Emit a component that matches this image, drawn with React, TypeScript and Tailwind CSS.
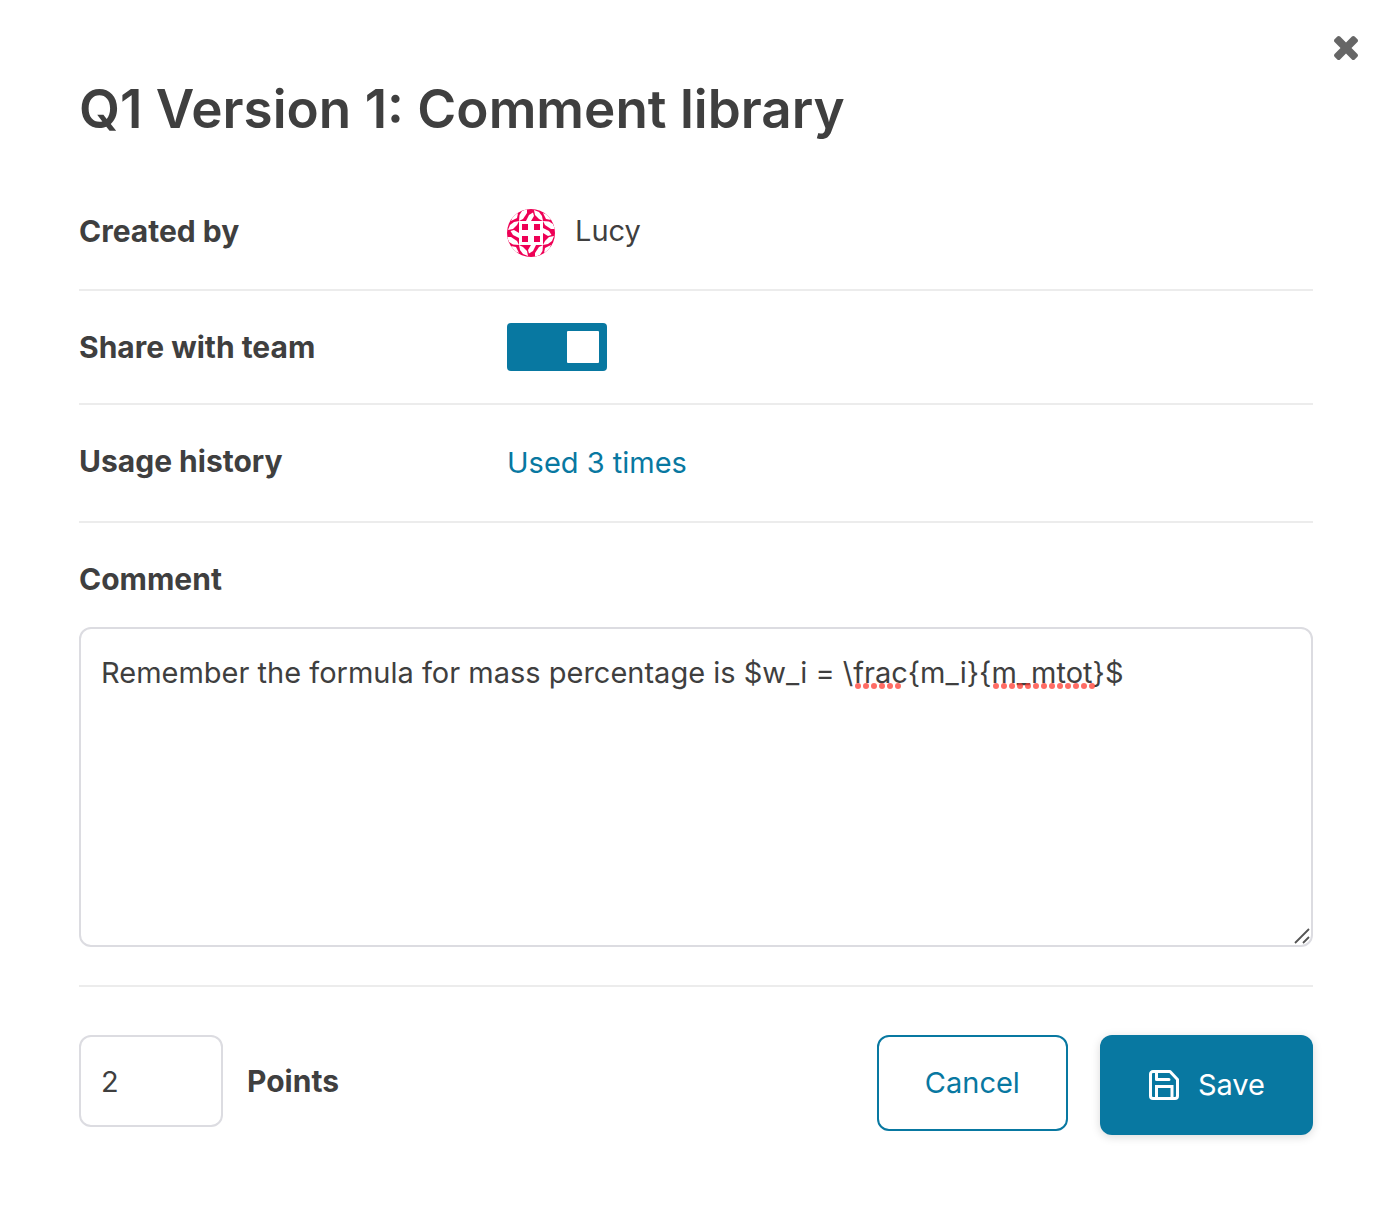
import { useState } from 'react';

// dotted underline drawn below a misspelt word
function SpellingDots({ count }: { count: number }) {
  return (
    <svg width={count * 8} height="6" className="block" aria-hidden="true">
      {Array.from({ length: count }, (_, i) => (
        <circle key={i} cx={i * 8 + 3} cy="3" r="3" fill="#ff3b30" fillOpacity="0.75" />
      ))}
    </svg>
  );
}

// one corner of the identicon, the others are rotations of it
function IdenticonQuarter({ turn }: { turn: number }) {
  return (
    <g transform={`rotate(${turn} 24 24)`} fill="#fff">
      <path d="M12 12 L12.500 6 L15 2 L20 0 L20 4 L16 10 Z" />
      <path d="M19 12 L22 6 L26 3.500 L27 7 L24 12 Z" />
      <path d="M27 1 L32 3 L35 7 L36 12 L32 10 L28 6 Z" />
      <path d="M36 4 L41 6 L44 11 L39 10 Z" />
      <path d="M12 12 h12 v12 h-12 z" />
      <path d="M15 15 h6 v6 h-6 z" fill="#ee0055" />
    </g>
  );
}

function Avatar() {
  return (
    <svg width="48" height="48" viewBox="0 0 48 48" className="rounded-full" aria-hidden="true">
      <rect width="48" height="48" fill="#ee0055" />
      <IdenticonQuarter turn={0} />
      <IdenticonQuarter turn={90} />
      <IdenticonQuarter turn={180} />
      <IdenticonQuarter turn={270} />
    </svg>
  );
}

function CloseIcon() {
  return (
    <svg width="24" height="24" viewBox="302 366 1188 1188" fill="currentColor" aria-hidden="true">
      <path d="M1490 1322q0 40-28 68l-136 136q-28 28-68 28t-68-28l-294-294-294 294q-28 28-68 28t-68-28l-136-136q-28-28-28-68t28-68l294-294-294-294q-28-28-28-68t28-68l136-136q28-28 68-28t68 28l294 294 294-294q28-28 68-28t68 28l136 136q28 28 28 68t-28 68l-294 294 294 294q28 28 28 68z" />
    </svg>
  );
}

function SaveIcon() {
  return (
    <svg width="32" height="32" viewBox="0 0 32 32" fill="none" stroke="currentColor" strokeWidth="3" strokeLinejoin="round" strokeLinecap="round" aria-hidden="true">
      <path d="M5 2.500 H22 L29.500 10.500 V27 A2.500 2.500 0 0 1 27 29.500 H5 A2.500 2.500 0 0 1 2.500 27 V5 A2.500 2.500 0 0 1 5 2.500 Z" />
      <path d="M8.500 3 V10.500 H21" />
      <path d="M8.500 29 V17.500 H24 V29" strokeLinejoin="miter" />
    </svg>
  );
}

export default function App() {
  const [shared, setShared] = useState(true);
  const [comment, setComment] = useState('Remember the formula for mass percentage is $w_i = \\frac{m_i}{m_mtot}$');
  const [points, setPoints] = useState('2');

  return (
    <div role="dialog" aria-labelledby="title" className="relative min-h-screen bg-white py-20 pr-[78px] pl-[79px] font-['Inter',sans-serif] text-[29px] leading-9 text-[#3f3f3f]">
      <button type="button" aria-label="Close" className="absolute top-9 right-[33px] text-[#666]">
        <CloseIcon />
      </button>

      <h1 id="title" className="text-[53px] leading-[58px] font-semibold">Q1 Version 1: Comment library</h1>

      {/* Details */}
      <dl className="mt-[38px]">
        <div className="flex h-[115px] items-center border-b-2 border-[#ececec]">
          <dt className="w-[428px] pb-1 text-[30px] font-bold">Created by</dt>
          <dd className="flex items-center gap-5">
            <Avatar />
            <span className="pb-1">Lucy</span>
          </dd>
        </div>
        <div className="flex h-[114px] items-center border-b-2 border-[#ececec]">
          <dt className="w-[428px] text-[30px] font-bold">
            <label htmlFor="share">Share with team</label>
          </dt>
          <dd className="flex">
            <input
              id="share"
              type="checkbox"
              role="switch"
              checked={shared}
              onChange={e => setShared(e.target.checked)}
              className="flex h-12 w-[100px] cursor-pointer appearance-none items-center rounded-sm bg-gray-400 p-2 before:size-8 before:rounded-[1px] before:bg-white checked:justify-end checked:bg-[#0878a1]"
            />
          </dd>
        </div>
        <div className="flex h-[118px] items-center border-b-2 border-[#ececec]">
          <dt className="w-[428px] pb-1 text-[30px] font-bold">Usage history</dt>
          <dd><a href="#usage" className="text-[#0878a1]">Used 3 times</a></dd>
        </div>
      </dl>

      {/* Comment */}
      <div className="border-b-2 border-[#ececec] py-[38px]">
        <label htmlFor="comment" className="block text-[30px] font-bold">Comment</label>
        <div className="relative mt-[30px]">
          <textarea
            id="comment"
            value={comment}
            spellCheck={false}
            onChange={e => setComment(e.target.value)}
            className="block h-80 w-full resize-none rounded-xl border-2 border-[#dcdce1] px-5 py-[26px]"
          />
          <div className="pointer-events-none absolute top-14 left-[776px] flex gap-[90px]">
            <SpellingDots count={6} />
            <SpellingDots count={13} />
          </div>
          <svg width="16" height="16" viewBox="0 0 16 16" className="pointer-events-none absolute right-[3px] bottom-[3px]" stroke="#555" strokeWidth="1.800" aria-hidden="true">
            <path d="M1 15 L15 1 M9 15 L15 9" />
          </svg>
        </div>
      </div>

      {/* Footer */}
      <div className="mt-12 flex items-start justify-between">
        <div className="flex items-center gap-6">
          <input
            id="points"
            type="text"
            inputMode="numeric"
            value={points}
            onChange={e => setPoints(e.target.value)}
            className="h-[92px] w-36 rounded-xl border-2 border-[#dcdce1] px-5"
          />
          <label htmlFor="points" className="text-[30px] font-bold">Points</label>
        </div>
        <div className="flex items-start gap-8">
          <button type="button" className="h-24 rounded-xl border-2 border-[#0878a1] px-[46px] text-[#0878a1]">Cancel</button>
          <button type="button" className="flex h-[100px] items-center gap-[18px] rounded-xl bg-[#0878a1] px-12 text-white shadow-[0_2px_10px_rgba(0,0,0,0.15)]">
            <SaveIcon />
            Save
          </button>
        </div>
      </div>
    </div>
  );
}
